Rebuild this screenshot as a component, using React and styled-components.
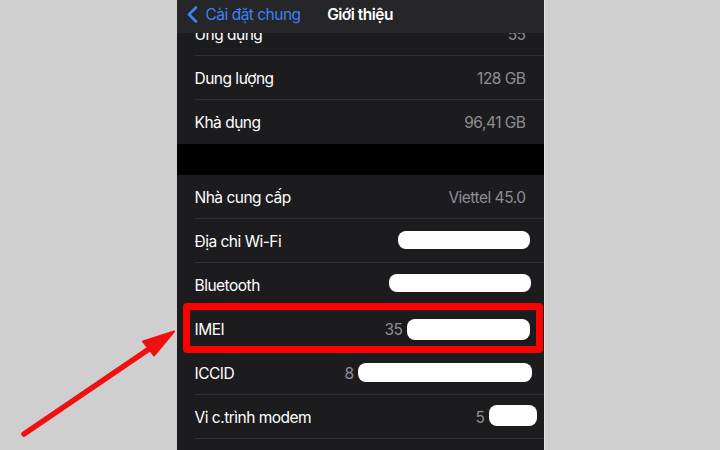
import React from 'react';
import styled, { createGlobalStyle } from 'styled-components';

const GlobalStyle = createGlobalStyle`
  html, body { margin: 0; padding: 0; background: #cfcfcf; }
  body { font-family: Inter, "Noto Sans", "Liberation Sans", sans-serif; }
`;

const Page = styled.div`
  position: relative;
  width: 720px;
  height: 450px;
  overflow: hidden;
  display: flex;
  justify-content: center;
  background: #cfcfcf;
`;

const Phone = styled.div`
  position: relative;
  width: 367px;
  height: 450px;
  background: #1c1c1e;
  box-shadow: 1px 0 0 #e4e4e4;
  overflow: hidden;
`;

const NavBar = styled.div`
  position: absolute;
  top: 0;
  left: 0;
  right: 0;
  height: 33px;
  padding-bottom: 5px;
  box-sizing: border-box;
  background: #262628;
  display: grid;
  grid-template-columns: 1fr auto 1fr;
  align-items: center;
  z-index: 2;
`;

const Back = styled.div`
  display: flex;
  align-items: center;
  gap: 8px;
  padding-left: 10px;
  color: #3a82f7;
  font-size: 15.5px;
  letter-spacing: -0.5px;
`;

const Title = styled.div`
  color: #fff;
  font-size: 15.5px;
  font-weight: 600;
  letter-spacing: -0.5px;
`;

const List = styled.div`
  padding-top: 12px;
`;

const Group = styled.div`
  background: #1c1c1e;
`;

const Spacer = styled.div`
  height: 31px;
  background: #000;
`;

const Row = styled.div`
  position: relative;
  height: 44px;
  display: flex;
  align-items: center;
  justify-content: space-between;
  padding: 0 18px;
  font-size: 15.5px;
  letter-spacing: -0.5px;

  &::after {
    content: "";
    display: ${(p) => (p.$last ? 'none' : 'block')};
    position: absolute;
    left: 18px;
    right: 0;
    bottom: 0;
    height: 1px;
    background: #2f2f31;
  }
`;

const Highlight = styled.div`
  position: absolute;
  top: -4px;
  bottom: -2px;
  left: 6px;
  right: 1px;
  border: 7px solid #f00;
  border-radius: 4px;
  z-index: 1;
`;

const Label = styled.span`
  color: #fff;
`;

const Value = styled.span`
  display: flex;
  align-items: center;
  gap: 4px;
  color: #8e8e93;
`;

const Redact = styled.span`
  display: inline-block;
  background: #fff;
  border-radius: 8px;
  margin-right: ${(p) => p.$shift || 0}px;
  margin-top: ${(p) => p.$up || 0}px;
`;

const Overlay = styled.svg`
  position: absolute;
  inset: 0;
  pointer-events: none;
`;

const Chevron = () => (
  <svg width="11" height="17" viewBox="0 0 11 17">
    <path d="M9 1.5 L2 8.5 L9 15.5" fill="none" stroke="#3a82f7" strokeWidth="2.6" strokeLinecap="round" strokeLinejoin="round" />
  </svg>
);

const top = [
  { label: 'Ứng dụng', value: '55' },
  { label: 'Dung lượng', value: '128 GB' },
  { label: 'Khả dụng', value: '96,41 GB' },
];

const bottom = [
  { label: 'Nhà cung cấp', value: 'Viettel 45.0' },
  { label: 'Địa chỉ Wi-Fi', redact: { w: 132, h: 18, shift: -4, up: -3 } },
  { label: 'Bluetooth', redact: { w: 142, h: 18, shift: -5, up: -4 } },
  { label: 'IMEI', value: '35', redact: { w: 123, h: 21, shift: -4 }, mark: true },
  { label: 'ICCID', value: '8', redact: { w: 174, h: 19, shift: -6, up: -2 } },
  { label: 'Vi c.trình modem', value: '5', redact: { w: 48, h: 21, shift: -11, up: -4 } },
  { label: '', value: '' },
];

const Item = ({ item, last }) => (
  <Row $last={last}>
    {item.mark && <Highlight />}
    <Label>{item.label}</Label>
    <Value>
      {item.value}
      {item.redact && (
        <Redact
          $shift={item.redact.shift}
          $up={item.redact.up}
          style={{ width: item.redact.w, height: item.redact.h }}
        />
      )}
    </Value>
  </Row>
);

export default function App() {
  return (
    <>
      <GlobalStyle />
      <Page>
        <Phone>
          <NavBar>
            <Back>
              <Chevron />
              Cài đặt chung
            </Back>
            <Title>Giới thiệu</Title>
            <div />
          </NavBar>
          <List>
            <Group>
              {top.map((it, i) => (
                <Item key={i} item={it} last={i === top.length - 1} />
              ))}
            </Group>
            <Spacer />
            <Group>
              {bottom.map((it, i) => (
                <Item key={i} item={it} />
              ))}
            </Group>
          </List>
        </Phone>
        <Overlay width="720" height="450" viewBox="0 0 720 450">
          <line x1="24" y1="434" x2="152" y2="347" stroke="#f01010" strokeWidth="5.5" strokeLinecap="round" />
          <polygon points="174,331.5 143,341.5 154,355.5" fill="#f01010" stroke="#f01010" strokeWidth="2" strokeLinejoin="round" />
        </Overlay>
      </Page>
    </>
  );
}
